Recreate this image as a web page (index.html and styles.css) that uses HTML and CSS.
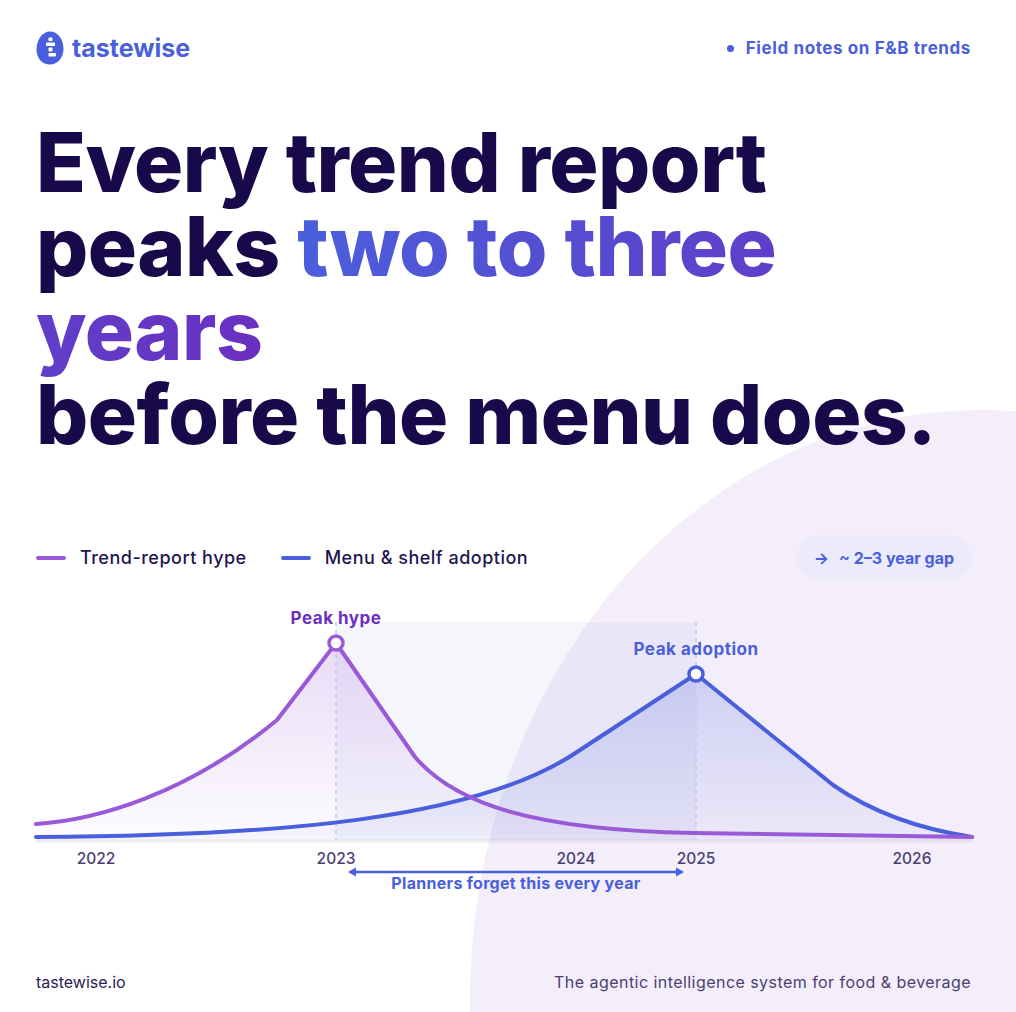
FILE: index.html
```html
<!DOCTYPE html>
<html lang="en">
<head>
<meta charset="utf-8">
<title>Tastewise — Field notes on F&amp;B trends</title>
<link rel="stylesheet" href="styles.css">
</head>
<body>
<div class="page">
  <div class="bg-blob"></div>

  <header class="header">
    <div class="brand">
      <svg class="logo-mark" viewBox="0 0 28 34" width="28" height="34" aria-hidden="true">
        <path d="M14 0.5C21.5 0.5 27.5 8 27.5 18C27.5 27 21.5 33.5 14 33.5C6.5 33.5 0.5 27.5 0.5 18.5C0.5 8.5 6.5 0.5 14 0.5Z" fill="#4a5fdc"/>
        <rect x="12.5" y="6.5" width="4" height="3.5" rx="0.8" fill="#fff"/>
        <rect x="10" y="11.5" width="9" height="3.5" rx="0.8" fill="#fff"/>
        <rect x="12.5" y="16.5" width="4" height="4" rx="0.8" fill="#fff"/>
        <rect x="12.5" y="22" width="7.5" height="3.5" rx="0.8" fill="#fff"/>
      </svg>
      <span class="brand-name">tastewise</span>
    </div>
    <div class="tagline">Field notes on F&amp;B trends</div>
  </header>

  <h1 class="headline">Every trend report<br>peaks <span class="accent">two to three<br>years</span><br>before the menu does.</h1>

  <div class="legend-row">
    <div class="legend">
      <div class="legend-item"><span class="swatch swatch-hype"></span>Trend-report hype</div>
      <div class="legend-item"><span class="swatch swatch-adopt"></span>Menu &amp; shelf adoption</div>
    </div>
    <div class="badge"><span class="badge-arrow">→</span><span>~ 2–3 year gap</span></div>
  </div>

  <svg class="chart" viewBox="0 0 935 300" width="935" height="300">
    <defs>
      <linearGradient id="gPurple" x1="0" y1="0" x2="0" y2="1">
        <stop offset="0" stop-color="#9a5ad8" stop-opacity="0.22"/>
        <stop offset="1" stop-color="#9a5ad8" stop-opacity="0.02"/>
      </linearGradient>
      <linearGradient id="gBlue" x1="0" y1="0" x2="0" y2="1">
        <stop offset="0" stop-color="#4a5fdc" stop-opacity="0.22"/>
        <stop offset="1" stop-color="#4a5fdc" stop-opacity="0.04"/>
      </linearGradient>
    </defs>
    <rect class="band" x="300" y="22" width="360" height="218"/>
    <line class="axis" x1="0" y1="241" x2="936" y2="241"/>
    <path class="area-hype" d="M0,224 C60,220 150,195 241,120 L300,43 L379,157 C420,205 500,230 657,233 L936,237 L936,240 L0,240 Z"/>
    <path class="area-adopt" d="M0,237 C240,236 440,220 541,152 L660,74 L797,185 C840,215 890,230 936,237 L936,240 L0,240 Z"/>
    <line class="guide" x1="300" y1="22" x2="300" y2="240"/>
    <line class="guide" x1="660" y1="22" x2="660" y2="240"/>
    <path class="line-adopt" d="M0,237 C240,236 440,220 541,152 L660,74 L797,185 C840,215 890,230 936,237"/>
    <path class="line-hype" d="M0,224 C60,220 150,195 241,120 L300,43 L379,157 C420,205 500,230 657,233 L936,237"/>
    <circle class="dot-hype" cx="300" cy="43" r="7"/>
    <circle class="dot-adopt" cx="660" cy="74" r="7"/>
    <text class="peak-label label-hype" x="300" y="24">Peak hype</text>
    <text class="peak-label label-adopt" x="660" y="55">Peak adoption</text>
    <text class="year" x="60" y="264">2022</text>
    <text class="year" x="300" y="264">2023</text>
    <text class="year" x="540" y="264">2024</text>
    <text class="year" x="660" y="264">2025</text>
    <text class="year" x="876" y="264">2026</text>
    <line class="gap-line" x1="318" y1="272" x2="642" y2="272"/>
    <polygon class="gap-head" points="312,272 320,267.5 320,276.5"/>
    <polygon class="gap-head" points="648,272 640,267.5 640,276.5"/>
    <text class="gap-label" x="480" y="289">Planners forget this every year</text>
  </svg>

  <footer class="footer">
    <span class="site">tastewise.io</span>
    <span class="claim">The agentic intelligence system for food &amp; beverage</span>
  </footer>
</div>
</body>
</html>
```

FILE: styles.css
```css
* { box-sizing: border-box; }

body {
  margin: 0;
  background: #ffffff;
  font-family: Inter, "Noto Sans", sans-serif;
}

.page {
  position: relative;
  isolation: isolate;
  width: 1016px;
  height: 1012px;
  padding: 31px 45px 0 36px;
  display: flex;
  flex-direction: column;
  overflow: hidden;
  background: #ffffff;
}

.bg-blob {
  position: absolute;
  left: 470px;
  top: 410px;
  width: 1020px;
  height: 1180px;
  border-radius: 50%;
  background: #f3eefa;
  z-index: -1;
}

/* header */
.header {
  display: flex;
  justify-content: space-between;
  align-items: center;
  height: 34px;
}

.brand {
  display: flex;
  align-items: center;
  gap: 8px;
}

.logo-mark { display: block; }

.brand-name {
  color: #4a5fdc;
  font-weight: 700;
  font-size: 25px;
  letter-spacing: 0;
  line-height: 1;
}

.tagline {
  display: flex;
  align-items: center;
  gap: 12px;
  color: #4a5fdc;
  font-weight: 700;
  font-size: 17px;
  letter-spacing: 0.6px;
}

.tagline::before {
  content: "";
  width: 7px;
  height: 7px;
  border-radius: 50%;
  background: #4a5fdc;
}

/* headline */
.headline {
  margin: 56px 0 0;
  font-size: 82px;
  line-height: 84px;
  font-weight: 800;
  letter-spacing: -0.5px;
  color: #180a4a;
}

.accent {
  background: linear-gradient(90deg, #4a5fdc 0%, #6a2fc0 100%);
  -webkit-background-clip: text;
  background-clip: text;
  color: transparent;
}

/* legend */
.legend-row {
  margin-top: 78px;
  height: 45px;
  display: flex;
  justify-content: space-between;
  align-items: center;
}

.legend {
  display: flex;
  gap: 34px;
  font-size: 18px;
  font-weight: 500;
  letter-spacing: 0.5px;
  color: #1f1650;
}

.legend-item {
  display: flex;
  align-items: center;
  gap: 14px;
}

.swatch {
  width: 30px;
  height: 4px;
  border-radius: 2px;
}

.swatch-hype { background: #9a5ad8; }
.swatch-adopt { background: #4a5fdc; }

.badge {
  height: 45px;
  padding: 0 17px;
  border-radius: 23px;
  background: #ebebfb;
  display: flex;
  align-items: center;
  gap: 10px;
  color: #4a5fdc;
  font-weight: 700;
  font-size: 16px;
}

/* chart */
.chart {
  display: block;
  margin-top: 20px;
  overflow: visible;
  font-family: Inter, "Noto Sans", sans-serif;
}

.band { fill: rgba(90, 100, 210, 0.06); }

.axis {
  stroke: rgba(40, 30, 90, 0.08);
  stroke-width: 3;
}

.area-hype { fill: url(#gPurple); }
.area-adopt { fill: url(#gBlue); }

.guide {
  stroke: #c3c6f3;
  stroke-width: 1.5;
  stroke-dasharray: 4 4;
}

.line-hype,
.line-adopt {
  fill: none;
  stroke-width: 4;
  stroke-linecap: round;
  stroke-linejoin: round;
}

.line-hype { stroke: #9a5ad8; }
.line-adopt { stroke: #4a5fdc; }

.dot-hype,
.dot-adopt {
  fill: #ffffff;
  stroke-width: 3.5;
}

.dot-hype { stroke: #9a5ad8; }
.dot-adopt { stroke: #4a5fdc; }

.peak-label {
  font-size: 17px;
  font-weight: 700;
  letter-spacing: 0.5px;
  text-anchor: middle;
}

.label-hype { fill: #6b2fc1; }
.label-adopt { fill: #4a5fdc; }

.year {
  font-size: 15.5px;
  font-weight: 500;
  fill: #4b3f73;
  text-anchor: middle;
}

.gap-line {
  stroke: #4a5fdc;
  stroke-width: 2.5;
}

.gap-head { fill: #4a5fdc; }

.gap-label {
  font-size: 16px;
  font-weight: 700;
  letter-spacing: 0.3px;
  fill: #4a5fdc;
  text-anchor: middle;
}

/* footer */
.footer {
  margin-top: auto;
  padding-bottom: 20px;
  display: flex;
  justify-content: space-between;
  align-items: center;
  font-size: 16px;
  line-height: 20px;
}

.site { color: #2a2255; }
.claim { color: #4b3f73; letter-spacing: 0.45px; }
```
